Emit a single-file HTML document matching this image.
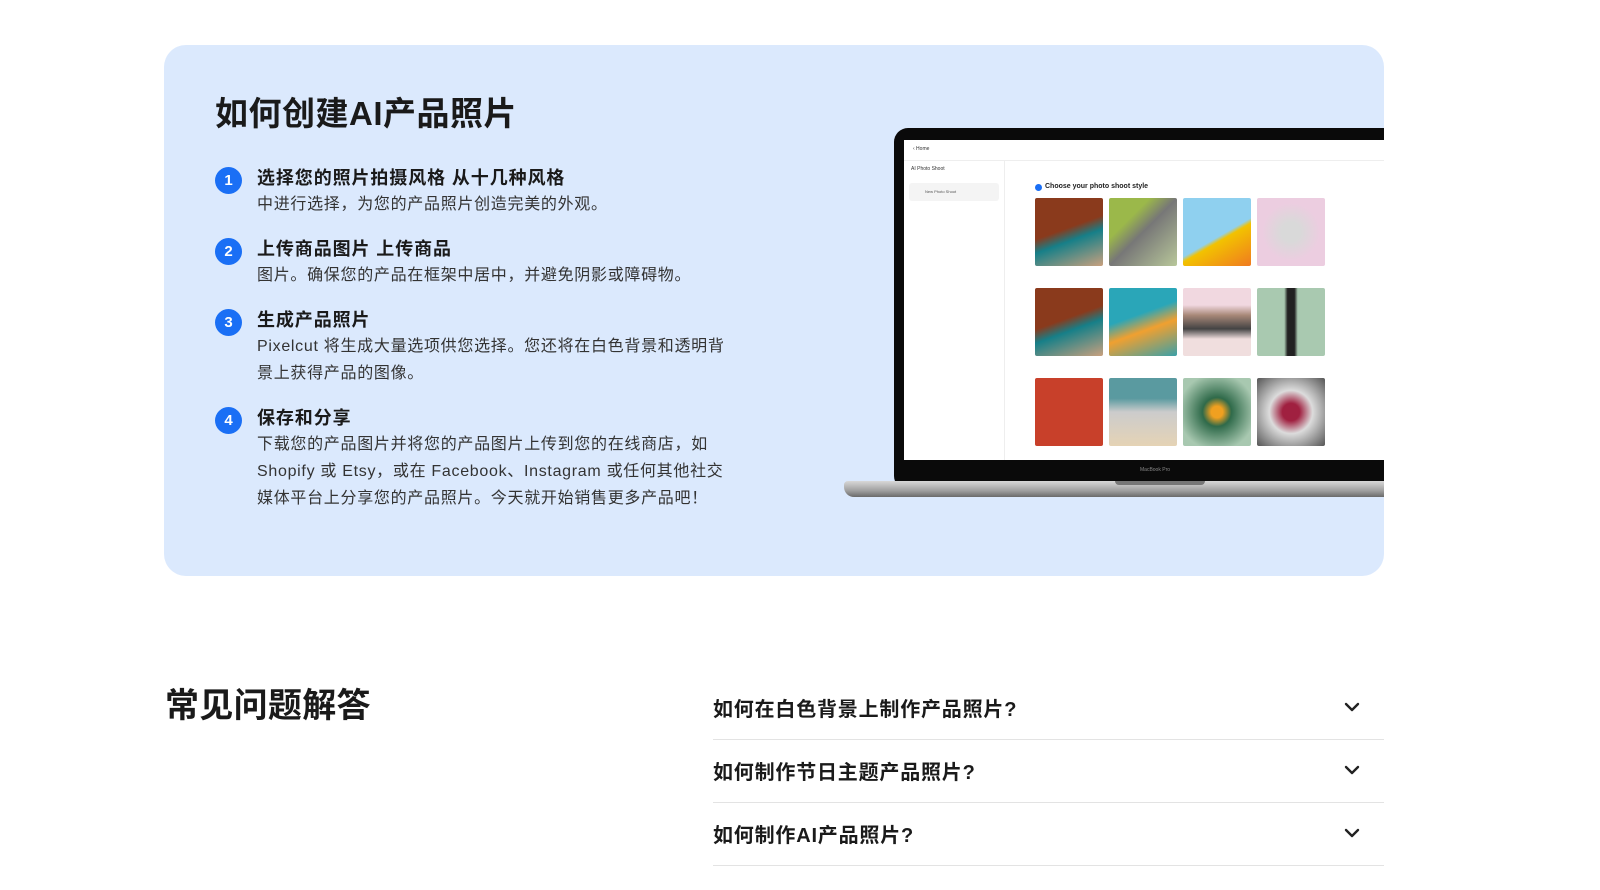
<!DOCTYPE html>
<html><head><meta charset="utf-8"><style>
*{margin:0;padding:0;box-sizing:border-box}
body{width:1600px;height:890px;background:#fff;font-family:"Liberation Sans","Noto Sans CJK SC",sans-serif;color:#1a1a1a;position:relative;overflow:hidden}
.card{position:absolute;left:164px;top:45px;width:1220px;height:531px;background:#dbe9fd;border-radius:22px;overflow:hidden}
h1{position:absolute;left:51px;top:42px;font-size:33px;font-weight:700;color:#1a1a1a;letter-spacing:0.5px}
.step{position:absolute;left:51px}
.num{position:absolute;left:0;top:2px;width:27px;height:27px;border-radius:50%;background:#1a6ff5;color:#fff;font-size:15px;font-weight:700;text-align:center;line-height:27px}
.st{position:absolute;left:42px;top:0;width:482px}
.st b{display:block;font-size:18px;line-height:26px;color:#1a1a1a;letter-spacing:0.9px}
.st p{font-size:16px;line-height:27px;color:#333;letter-spacing:0.7px}
.tile{position:absolute;width:68px;height:68px;border-radius:2px}
h2{position:absolute;left:165px;top:678px;font-size:34px;font-weight:700;letter-spacing:0.3px}
.q{position:absolute;left:713px;width:671px;height:63px;border-bottom:1.5px solid #e3e3e3;font-size:20px;font-weight:700;letter-spacing:0.8px}
.q span{position:absolute;left:0;top:16px}
.q svg{position:absolute;right:24px;top:25px}
</style></head><body>
<div class="card">
<h1>如何创建AI产品照片</h1>
<div class="step" style="top:120px"><div class="num">1</div><div class="st"><b>选择您的照片拍摄风格 从十几种风格</b><p>中进行选择，为您的产品照片创造完美的外观。</p></div></div>
<div class="step" style="top:191px"><div class="num">2</div><div class="st"><b>上传商品图片 上传商品</b><p>图片。确保您的产品在框架中居中，并避免阴影或障碍物。</p></div></div>
<div class="step" style="top:262px"><div class="num">3</div><div class="st"><b>生成产品照片</b><p>Pixelcut 将生成大量选项供您选择。您还将在白色背景和透明背景上获得产品的图像。</p></div></div>
<div class="step" style="top:360px"><div class="num">4</div><div class="st"><b>保存和分享</b><p>下载您的产品图片并将您的产品图片上传到您的在线商店，如 Shopify 或 Etsy，或在 Facebook、Instagram 或任何其他社交媒体平台上分享您的产品照片。今天就开始销售更多产品吧！</p></div></div>
</div>
<!-- laptop -->
<div style="position:absolute;left:894px;top:128px;width:520px;height:362px;background:#0a0a0a;border-radius:14px"></div>
<div style="position:absolute;left:904px;top:140px;width:490px;height:320px;background:#fff"></div>
<div style="position:absolute;left:904px;top:160px;width:480px;height:1px;background:#eee"></div>
<div style="position:absolute;left:1004px;top:160px;width:1px;height:300px;background:#eee"></div>
<div style="position:absolute;left:913px;top:146px;font-size:5px;color:#333">‹ Home</div>
<div style="position:absolute;left:911px;top:166px;font-size:5px;color:#333">AI Photo Shoot</div>
<div style="position:absolute;left:909px;top:183px;width:90px;height:18px;background:#f4f4f4;border-radius:3px;font-size:4px;color:#555;padding:6px 0 0 16px">New Photo Shoot</div>
<div style="position:absolute;left:1035px;top:184px;width:7px;height:7px;border-radius:50%;background:#1a6ff5"></div>
<div style="position:absolute;left:1045px;top:183px;font-size:7px;font-weight:700;color:#222">Choose your photo shoot style</div>
<div class="tile" style="left:1035px;top:198px;background:linear-gradient(160deg,#8a3a1c 45%,#167f88 60%,#c9a07e)"></div>
<div class="tile" style="left:1109px;top:198px;background:linear-gradient(135deg,#9bb84a 30%,#777 50%,#b8c79a)"></div>
<div class="tile" style="left:1183px;top:198px;background:linear-gradient(150deg,#8fd0ef 55%,#f2c200 60%,#f07a20)"></div>
<div class="tile" style="left:1257px;top:198px;background:radial-gradient(circle,#d9d9d9 20%,#eccde0 60%)"></div>
<div class="tile" style="left:1035px;top:288px;background:linear-gradient(160deg,#8a3a1c 45%,#167f88 60%,#c9a07e)"></div>
<div class="tile" style="left:1109px;top:288px;background:linear-gradient(160deg,#2aa6b8 40%,#f0a030 60%,#3aa0a8)"></div>
<div class="tile" style="left:1183px;top:288px;background:linear-gradient(180deg,#f1d8e0 25%,#a88878 40%,#444 60%,#f0dede 75%)"></div>
<div class="tile" style="left:1257px;top:288px;background:linear-gradient(90deg,#a9c9b0 40%,#222 45%,#222 55%,#a9c9b0 60%)"></div>
<div class="tile" style="left:1035px;top:378px;background:#c8402a"></div>
<div class="tile" style="left:1109px;top:378px;background:linear-gradient(180deg,#5a9aa0 30%,#ccc 50%,#e5d3b5)"></div>
<div class="tile" style="left:1183px;top:378px;background:radial-gradient(ellipse at center,#f0a020 12%,#2f6a4a 30%,#a8c8b0 80%)"></div>
<div class="tile" style="left:1257px;top:378px;background:radial-gradient(ellipse at center,#a02040 18%,#dcdcdc 45%,#555)"></div>
<div style="position:absolute;left:1140px;top:467px;font-size:5px;color:#888">MacBook Pro</div>
<div style="position:absolute;left:844px;top:481px;width:556px;height:16px;background:linear-gradient(#d8d8d8,#a0a0a0 60%,#6a6a6a);border-radius:4px 0 0 10px"></div>
<div style="position:absolute;left:1115px;top:481px;width:90px;height:4px;background:#777;border-radius:0 0 4px 4px"></div>
<div style="position:absolute;left:1384px;top:120px;width:216px;height:400px;background:#fff"></div>

<h2>常见问题解答</h2>
<div class="q" style="top:677px"><span>如何在白色背景上制作产品照片?</span><svg width="16" height="10" viewBox="0 0 16 10"><path d="M2 2l6 6 6-6" fill="none" stroke="#222" stroke-width="2.4" stroke-linecap="round" stroke-linejoin="round"/></svg></div>
<div class="q" style="top:740px"><span>如何制作节日主题产品照片?</span><svg width="16" height="10" viewBox="0 0 16 10"><path d="M2 2l6 6 6-6" fill="none" stroke="#222" stroke-width="2.4" stroke-linecap="round" stroke-linejoin="round"/></svg></div>
<div class="q" style="top:803px"><span>如何制作AI产品照片?</span><svg width="16" height="10" viewBox="0 0 16 10"><path d="M2 2l6 6 6-6" fill="none" stroke="#222" stroke-width="2.4" stroke-linecap="round" stroke-linejoin="round"/></svg></div>
</body></html>
